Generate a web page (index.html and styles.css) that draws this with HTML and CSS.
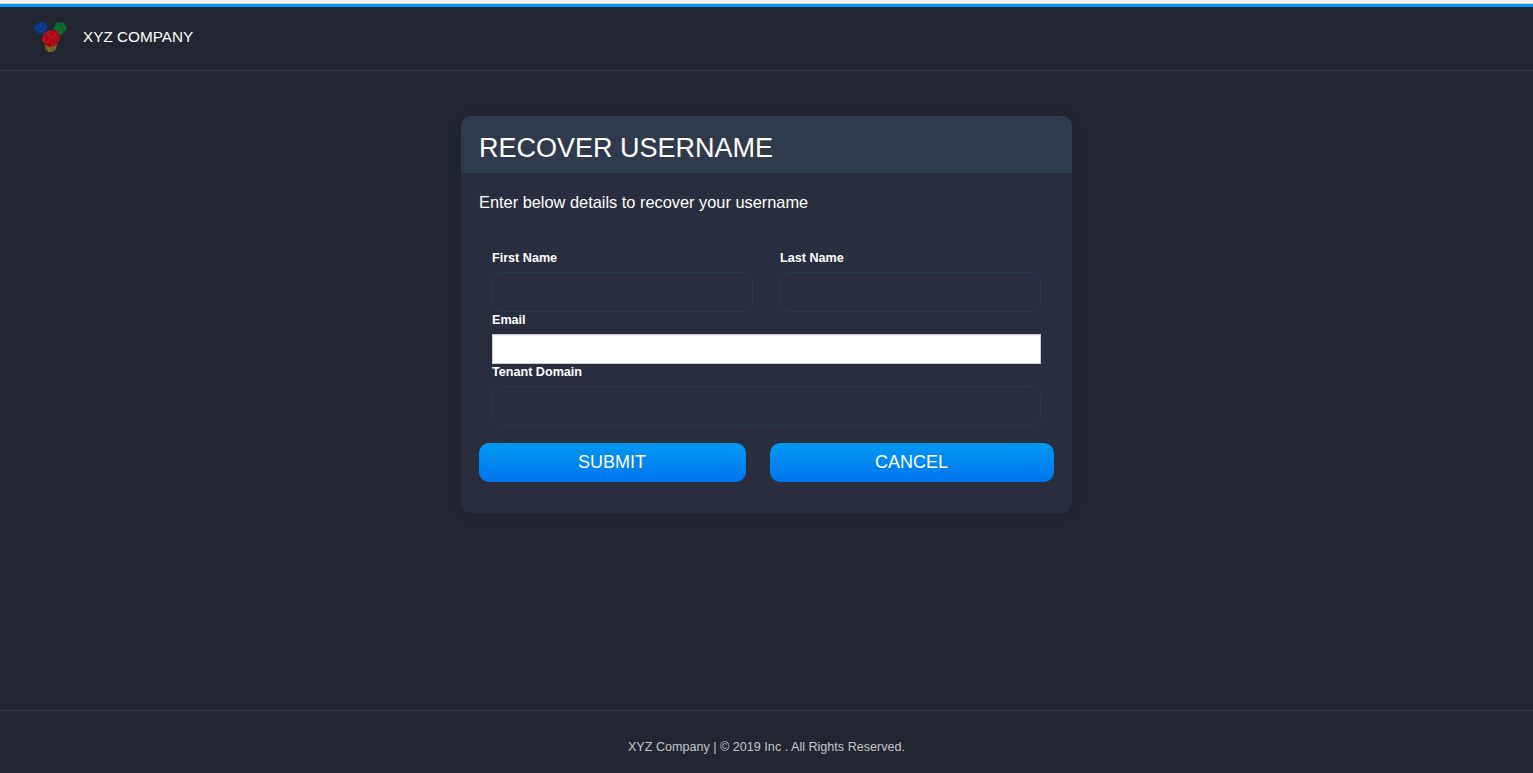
FILE: index.html
```html
<!DOCTYPE html>
<html lang="en">
<head>
<meta charset="utf-8">
<title>Recover Username</title>
<link rel="stylesheet" href="styles.css">
</head>
<body>
<header class="header">
  <svg class="logo" width="34" height="32" viewBox="0 0 34 32" aria-hidden="true">
    <defs>
      <filter id="grain" x="-10%" y="-10%" width="120%" height="120%">
        <feTurbulence type="fractalNoise" baseFrequency="0.35" numOctaves="2" seed="4" result="n"/>
        <feColorMatrix in="n" type="matrix" values="0 0 0 0 0  0 0 0 0 0  0 0 0 0 0  3 0 0 0 -1.1" result="d"/>
        <feComposite in="d" in2="SourceGraphic" operator="in" result="spots"/>
        <feComponentTransfer in="spots" result="soft"><feFuncA type="linear" slope="0.5"/></feComponentTransfer>
        <feMerge><feMergeNode in="SourceGraphic"/><feMergeNode in="soft"/></feMerge>
      </filter>
    </defs>
    <g filter="url(#grain)">
      <path d="M11 23h12l-1 5-3 3h-5l-3-3z" fill="#7a6a2c"/>
      <path d="M5 1.500 8 .8l3.500 1.200 2 4-1 4.500-4 2.800-4.500-1-3-3-.5-4z" fill="#083f9c"/>
      <path d="m22 2 4-1 4 1 3 5-2 4-4 3-5-1-3-4z" fill="#077536"/>
      <path d="m13 10 6-1 5 1 2 6-1 5-4 4-5 1-5-2-3-5 1-5z" fill="#c30b1e"/>
    </g>
  </svg>
  <span class="brand">XYZ COMPANY</span>
</header>
<main class="main">
  <section class="card">
    <h1 class="title">RECOVER USERNAME</h1>
    <form class="form">
      <p class="intro">Enter below details to recover your username</p>
      <div class="fields">
        <div class="pair">
          <div class="field"><label class="label" for="first">First Name</label><input class="input" id="first" type="text"></div>
          <div class="field"><label class="label" for="last">Last Name</label><input class="input" id="last" type="text"></div>
        </div>
        <div class="field"><label class="label" for="email">Email</label><input class="input plain" id="email" type="email"></div>
        <div class="field"><label class="label" for="tenant">Tenant Domain</label><input class="input" id="tenant" type="text"></div>
      </div>
      <div class="actions">
        <button class="button" type="button">SUBMIT</button>
        <button class="button" type="button">CANCEL</button>
      </div>
    </form>
  </section>
</main>
<footer class="footer">XYZ Company | © 2019 Inc . All Rights Reserved.</footer>
</body>
</html>
```
FILE: styles.css
```css
* { box-sizing: border-box; }
body {
  margin: 0;
  height: 773px;
  display: flex;
  flex-direction: column;
  overflow: hidden;
  background: #222631;
  color: #fff;
  font-family: "Liberation Sans", Arial, sans-serif;
}
body::before {
  content: "";
  flex: none;
  height: 7px;
  background: linear-gradient(#f2f1f0 0 3px, #d3cfca 3px 4px, #0797f5 4px);
}
.header {
  flex: none;
  height: 64px;
  padding: 14px 0 0 34px;
  display: flex;
  align-items: flex-start;
  gap: 15px;
  border-bottom: 1px solid #31384a;
}
.brand { font-size: 15.3px; line-height: 32px; }
.main {
  flex: 1;
  display: flex;
  justify-content: center;
  align-items: flex-start;
  padding-top: 45px;
}
.card {
  width: 611px;
  height: 397px;
  border-radius: 10px;
  overflow: hidden;
  background: #282e3e;
  box-shadow: 0 0 16px rgba(0, 0, 0, .06);
}
.title {
  margin: 0;
  height: 57px;
  padding: 4px 18px 0;
  font-size: 27px;
  font-weight: 400;
  line-height: 57px;
  background: #2f3b4c;
}
.form { padding: 18px 18px 0; }
.intro { margin: 0; font-size: 16.36px; line-height: 23px; }
.fields { padding: 36px 13px 0; }
.pair { display: grid; grid-template-columns: 1fr 1fr; gap: 27px; }
.field { display: flex; flex-direction: column; }
.label { height: 22px; font-size: 12.6px; font-weight: 700; line-height: 16px; }
.input {
  width: 100%;
  height: 40px;
  padding: 0 12px;
  border: 1px solid #243b50;
  border-radius: 10px;
  outline: 0;
  background: transparent;
  color: #fff;
}
.plain {
  height: 30px;
  border-color: #ccc;
  border-radius: 0;
  background: #fff;
  box-shadow: inset 0 1px 1px rgba(0, 0, 0, .075);
  color: #333;
}
.actions {
  display: grid;
  grid-template-columns: 267px 284px;
  gap: 24px;
  padding-top: 17px;
}
.button {
  height: 39px;
  padding: 0 1px 1px 0;
  border: 0;
  border-radius: 10px;
  background: linear-gradient(#0399f4, #0074ed);
  color: #fff;
  font: 18px "Liberation Sans", Arial, sans-serif;
}
.footer {
  flex: none;
  height: 63px;
  padding-top: 28px;
  border-top: 1px solid #31384a;
  color: #c4c6c9;
  font-size: 12.6px;
  line-height: 16px;
  text-align: center;
}
```
